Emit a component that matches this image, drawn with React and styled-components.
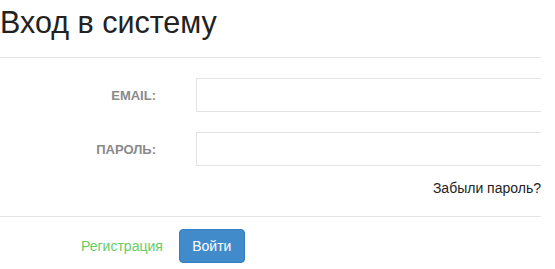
import React from 'react';
import styled, { createGlobalStyle } from 'styled-components';

const GlobalStyle = createGlobalStyle`
  body {
    margin: 0;
    background: #fff;
    font-family: "Liberation Sans", Arial, sans-serif;
    color: #333;
  }
`;

const App = () => {
  return (
    <>
      <GlobalStyle />
      <Panel>
        <Header>
          <Title>Вход в систему</Title>
        </Header>
        <Body>
          <FormRow>
            <Label>EMAIL:</Label>
            <Input type="text" />
          </FormRow>
          <FormRow>
            <Label>ПАРОЛЬ:</Label>
            <Input type="password" />
          </FormRow>
          <Forgot href="#">Забыли пароль?</Forgot>
        </Body>
        <Footer>
          <RegLink href="#">Регистрация</RegLink>
          <Button>Войти</Button>
        </Footer>
      </Panel>
    </>
  );
};

export default App;

const Panel = styled.div`
  width: 541px;
  display: flex;
  flex-direction: column;
`;

const Header = styled.div`
  height: 57px;
  border-bottom: 1px solid #e5e5e5;
`;

const Title = styled.h1`
  margin: 0;
  padding-top: 5px;
  font-size: 30.5px;
  font-weight: normal;
  line-height: 34px;
  color: #222;
`;

const Body = styled.div`
  padding-top: 20px;
  display: flex;
  flex-direction: column;
  gap: 20px;
  border-bottom: 1px solid #e5e5e5;
  padding-bottom: 20px;
`;

const FormRow = styled.div`
  display: grid;
  grid-template-columns: 156px 1fr;
  column-gap: 40px;
  align-items: center;
`;

const Label = styled.label`
  text-align: right;
  font-size: 13px;
  font-weight: bold;
  color: #8a8a8a;
`;

const Input = styled.input`
  box-sizing: border-box;
  height: 34px;
  width: 100%;
  border: 1px solid #e3e3e3;
  border-right: none;
  padding: 6px 12px;
  font-size: 14px;
  outline: none;
`;

const Forgot = styled.a`
  align-self: flex-end;
  margin-top: -6px;
  font-size: 14px;
  color: #222;
  text-decoration: none;
`;

const Footer = styled.div`
  display: flex;
  align-items: center;
  gap: 16px;
  padding: 12px 0 0 81px;
`;

const RegLink = styled.a`
  font-size: 14px;
  color: #66cc66;
  text-decoration: none;
`;

const Button = styled.button`
  height: 34px;
  width: 66px;
  border: 1px solid #357ebd;
  border-radius: 4px;
  background: #428bca;
  color: #fff;
  font-family: "Liberation Sans", Arial, sans-serif;
  font-size: 14px;
  cursor: pointer;
`;
